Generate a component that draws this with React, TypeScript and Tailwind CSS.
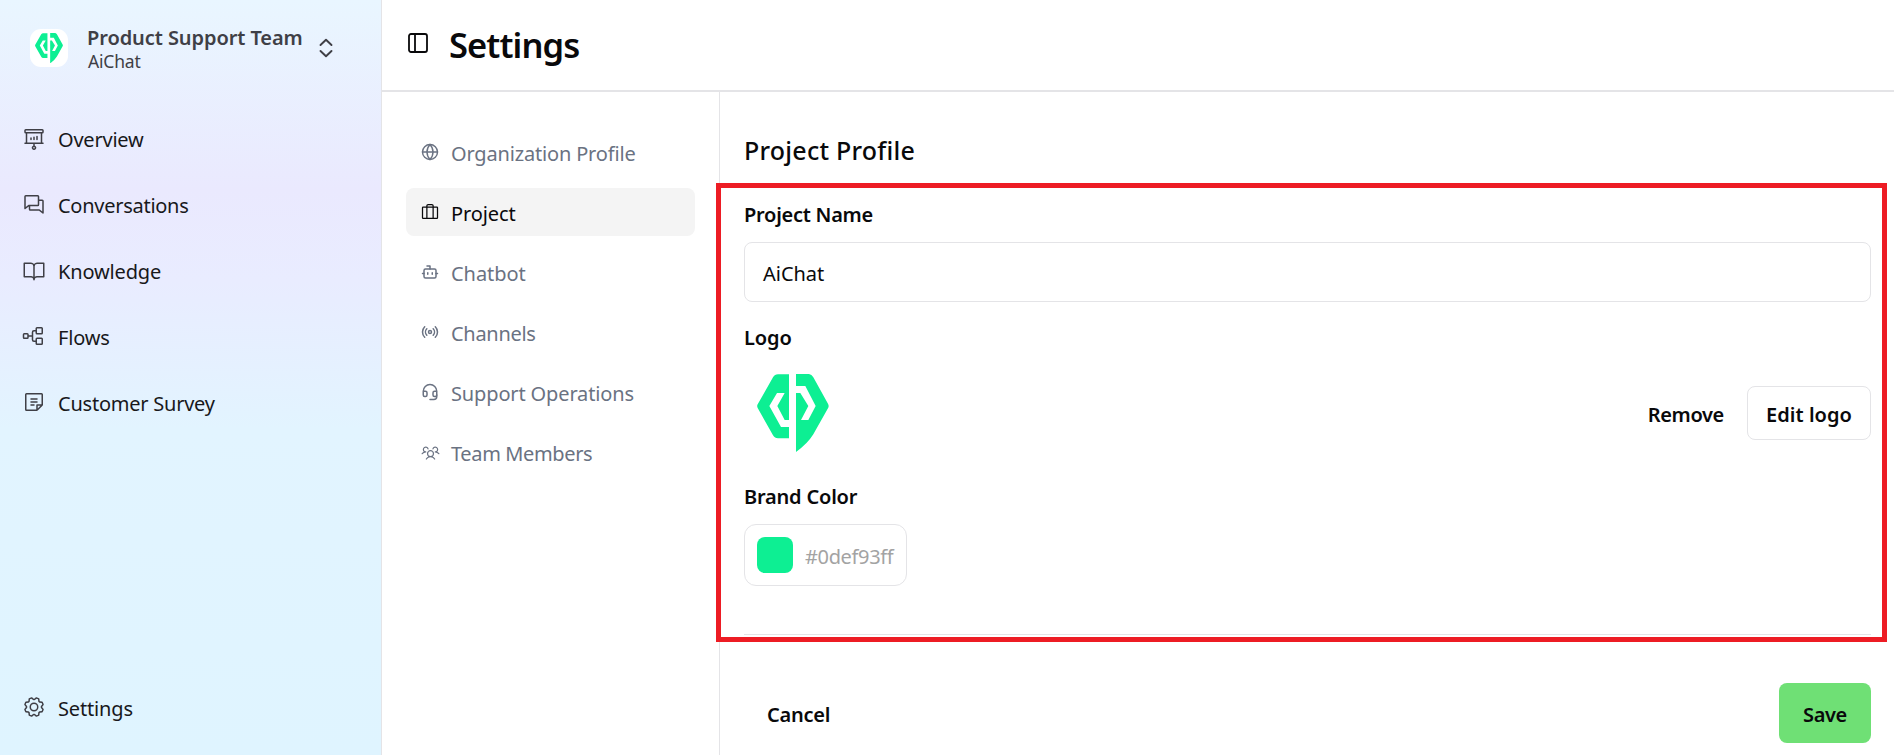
import type { ReactNode } from "react";
import { Bot, Globe, Headset, PanelLeft, Radio } from "lucide-react";
import {
  PiBookOpen,
  PiChats,
  PiGear,
  PiNote,
  PiProjectorScreenChart,
  PiSuitcase,
  PiTreeStructure,
  PiUsersThree,
} from "react-icons/pi";

function BrandMark({ className }: { className: string }) {
  return (
    <svg viewBox="171 72 216 235" className={className} aria-hidden="true">
      <path
        fill="#0def93"
        d="M267 73H234Q224 73 219 82L173 163Q170 168 173 174L219 256Q224 265 234 265H267V231H243L208 168L231 129H254L232 168L254 210H267Z"
      />
      <path
        fill="#0def93"
        d="M288 72H327Q335 73 340 82L384 161Q388 168 384 175L340 253Q323 281 288 306V129H301L325 168L303 210H325L347 168L316 108H288Z"
      />
    </svg>
  );
}

function SideItem({ icon, label, tracking }: { icon: ReactNode; label: string; tracking: string }) {
  return (
    <a className="flex h-[66px] items-center gap-3 pl-[22px] text-[#3f3f46]">
      <span className="pb-[2px]">{icon}</span>
      <span className={`pt-[2px] text-xl leading-7 text-[#18181b] ${tracking}`}>{label}</span>
    </a>
  );
}

function NavItem({
  icon,
  label,
  tracking,
  active = false,
}: {
  icon: ReactNode;
  label: string;
  tracking: string;
  active?: boolean;
}) {
  return (
    <a
      className={`flex h-12 items-center gap-[11px] rounded-lg pl-[14px] ${
        active ? "bg-[#f4f4f4] text-[#09090b]" : "text-gray-500"
      }`}
    >
      <span className="flex size-5 items-center justify-center">{icon}</span>
      <span className={`pt-1 text-xl leading-7 ${tracking}`}>{label}</span>
    </a>
  );
}

function Label({ children, className }: { children: ReactNode; className: string }) {
  return <div className={`pt-px text-xl leading-7 font-semibold ${className}`}>{children}</div>;
}

export default function App() {
  return (
    <div className="relative flex h-[755px] w-[1894px] overflow-hidden bg-white font-['Noto_Sans',sans-serif] text-[#09090b]">
      <aside className="flex w-[382px] shrink-0 flex-col border-r border-[#e4e4e7] bg-[linear-gradient(180deg,#e9f6ff_0px,#eae9fe_190px,#e9ecff_280px,#e2f4ff_430px,#dff4ff_755px)]">
        <div className="flex h-[106px] items-start pt-[24px] pl-[30px]">
          <div className="mt-[5px] flex size-[38px] items-center justify-center rounded-[11px] bg-white">
            <BrandMark className="h-[30.5px] w-[28px]" />
          </div>
          <div className="ml-[19px] text-[#3f3f46]">
            <div className="text-xl leading-7 font-semibold tracking-[-0.08px]">Product Support Team</div>
            <div className="-mt-[3px] pl-px text-[17.5px] leading-6 tracking-[-0.18px]">AiChat</div>
          </div>
          <svg
            viewBox="0 0 14 20"
            className="mt-[14px] ml-4 h-5 w-[14px]"
            fill="none"
            stroke="#3f3f46"
            strokeWidth="1.9"
            strokeLinecap="round"
            strokeLinejoin="round"
          >
            <path d="M1.5 7 7 1.7 12.5 7M1.5 13 7 18.3 12.5 13" />
          </svg>
        </div>
        <nav>
          <SideItem icon={<PiProjectorScreenChart size={24} />} label="Overview" tracking="tracking-[-0.22px]" />
          <SideItem icon={<PiChats size={24} />} label="Conversations" tracking="tracking-[-0.27px]" />
          <SideItem icon={<PiBookOpen size={24} />} label="Knowledge" tracking="tracking-[-0.15px]" />
          <SideItem icon={<PiTreeStructure size={24} />} label="Flows" tracking="tracking-[-0.15px]" />
          <SideItem icon={<PiNote size={24} />} label="Customer Survey" tracking="tracking-[-0.23px]" />
        </nav>
        <div className="mt-auto pb-[14px]">
          <SideItem icon={<PiGear size={24} />} label="Settings" tracking="tracking-[-0.15px]" />
        </div>
      </aside>

      <div className="flex min-w-0 flex-1 flex-col">
        <header className="flex h-[92px] shrink-0 items-start border-b-2 border-[#e4e4e7] pl-6">
          <PanelLeft size={24} strokeWidth={1.8} className="mt-[31px]" />
          <h1 className="mt-[21px] ml-[19px] text-[34.5px] leading-[48px] font-semibold tracking-[-0.9px]">Settings</h1>
        </header>

        <div className="flex min-h-0 flex-1">
          <nav className="flex w-[338px] shrink-0 flex-col gap-3 border-r border-[#e4e4e7] px-6 pt-9">
            <NavItem icon={<Globe size={18} strokeWidth={1.9} />} label="Organization Profile" tracking="tracking-[-0.17px]" />
            <NavItem active icon={<PiSuitcase size={20} />} label="Project" tracking="tracking-[-0.1px]" />
            <NavItem icon={<Bot size={18} strokeWidth={2} />} label="Chatbot" tracking="tracking-[-0.06px]" />
            <NavItem icon={<Radio size={18} strokeWidth={2} />} label="Channels" tracking="tracking-[-0.3px]" />
            <NavItem icon={<Headset size={18} strokeWidth={2} />} label="Support Operations" tracking="tracking-[-0.14px]" />
            <NavItem icon={<PiUsersThree size={19} />} label="Team Members" tracking="tracking-[-0.36px]" />
          </nav>

          <main className="flex min-w-0 flex-1 flex-col pt-[42px] pr-[23px] pl-6">
            <h2 className="text-[25px] leading-8 font-medium tracking-[0.24px]">Project Profile</h2>

            <Label className="mt-[34px] -mb-px tracking-[-0.26px]">Project Name</Label>
            <div className="mt-[14px] flex h-[60px] items-center rounded-lg border border-[#e4e4e7] pl-[18px] text-xl tracking-[-0.03px]">
              <span className="pt-1">AiChat</span>
            </div>

            <Label className="mt-[21px] -mb-px tracking-[-0.09px]">Logo</Label>
            <div className="mt-[14px] flex h-24 items-center pl-[13px]">
              <BrandMark className="h-[78.3px] w-[72px]" />
              <div className="ml-auto flex items-center">
                <button className="mr-[23px] pt-[3px] text-xl font-semibold tracking-[-0.33px]">Remove</button>
                <button className="h-[54px] w-[124px] rounded-lg border border-[#e4e4e7] pt-[3px] text-xl font-semibold tracking-[0.04px]">
                  Edit logo
                </button>
              </div>
            </div>

            <Label className="mt-[21px] -mb-px tracking-[-0.2px]">Brand Color</Label>
            <div className="mt-[14px] flex h-[62px] w-[163px] items-center rounded-xl border border-[#e4e4e7] pl-3">
              <div className="size-9 rounded-lg bg-[#0def93]" />
              <span className="ml-[12px] pt-[3px] text-xl tracking-[-0.35px] text-[#a3a3a3]">#0def93ff</span>
            </div>

            <div className="mt-12 h-px shrink-0 bg-[#e4e4e7]" />
            <div className="mt-12 flex h-[60px] shrink-0 items-center justify-between pl-[23px] text-xl font-semibold">
              <button className="pt-[3px] tracking-[-0.25px]">Cancel</button>
              <button className="h-[60px] w-[92px] rounded-lg bg-[#6fe075] pt-[3px] tracking-[-0.35px]">Save</button>
            </div>
          </main>
        </div>
      </div>

      <div className="pointer-events-none absolute top-[183px] left-[716px] h-[459px] w-[1171px] border-[5px] border-[#ed1c24]" />
    </div>
  );
}
